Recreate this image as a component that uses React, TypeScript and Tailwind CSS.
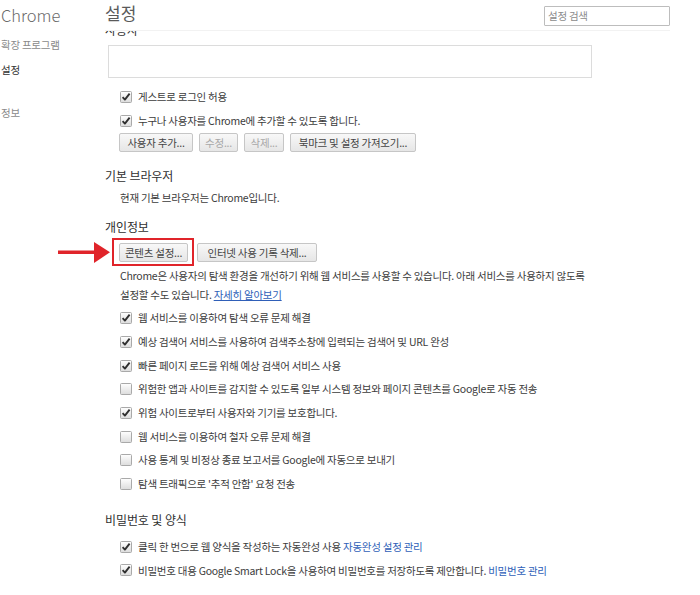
import type { ReactNode } from 'react'

const font = { fontFamily: "'Noto Sans CJK KR', 'Noto Sans', sans-serif" }

function Box({ checked }: { checked: boolean }) {
  return (
    <svg width="12" height="12" viewBox="0 0 12 12" className="shrink-0">
      <defs>
        <linearGradient id="cbg" x1="0" y1="0" x2="0" y2="1">
          <stop offset="0" stopColor="#ffffff" />
          <stop offset="1" stopColor="#dcdcdc" />
        </linearGradient>
      </defs>
      <rect x="0.5" y="0.5" width="11" height="11" rx="1" fill="url(#cbg)" stroke="#a9a9a9" />
      {checked && (
        <path d="M2.6 6.2 L4.9 8.6 L9.6 2.6" fill="none" stroke="#2f2f2f" strokeWidth="1.9" strokeLinejoin="round" />
      )}
    </svg>
  )
}

function Check({ checked = true, children }: { checked?: boolean; children: ReactNode }) {
  return (
    <div className="h-[23.7px] flex items-center pl-[15px] gap-[6px] whitespace-nowrap">
      <Box checked={checked} />
      <span>{children}</span>
    </div>
  )
}

function Btn({ children, disabled, className = '' }: { children: ReactNode; disabled?: boolean; className?: string }) {
  return (
    <button
      className={
        'h-[19px] rounded-[2px] border border-[#c6c6c6] bg-gradient-to-b from-[#f8f8f8] to-[#e6e6e6] text-[10.5px] leading-none whitespace-nowrap flex items-center justify-center ' +
        (disabled ? 'text-[#a8a8a8] ' : 'text-[#444] ') +
        className
      }
    >
      {children}
    </button>
  )
}

function Heading({ children, className = '' }: { children: ReactNode; className?: string }) {
  return <div className={'text-[12px] leading-[18px] text-[#303030] tracking-[-0.1px] ' + className}>{children}</div>
}

export default function App() {
  return (
    <div style={font} className="relative w-[700px] h-[595px] overflow-hidden bg-white flex text-[10.5px] tracking-[-0.25px] text-[#3c3c3c]">
      {/* Sidebar */}
      <div className="w-[105px] shrink-0 pl-[1px]">
        <div className="h-[31px] flex items-center text-[16.5px] text-[#6a6a6a] tracking-[0px] font-light">Chrome</div>
        <div className="mt-[6px] text-[#8a8a8a] leading-[16px]">확장 프로그램</div>
        <div className="mt-[9px] text-[#333] leading-[16px]">설정</div>
        <div className="mt-[27px] text-[#8a8a8a] leading-[16px]">정보</div>
      </div>

      {/* Main */}
      <div className="flex-1 flex flex-col">
        <div className="relative z-10 bg-white h-[31px] w-[565px] border-b border-[#f2f2f2] flex items-center justify-between">
          <div className="text-[17px] text-[#5a5a5a] tracking-[0px] -mt-[5px]">설정</div>
          <div className="w-[126px] h-[20px] border border-[#bdbdbd] rounded-[1px] flex items-center pl-[3px] text-[#8c8c8c] mt-[2px]">
            설정 검색
          </div>
        </div>

        <div className="flex flex-col">
          <Heading className="-mt-[10px]">사용자</Heading>
          <div className="mt-[6px] ml-[3px] w-[484px] h-[33px] border border-[#dcdcdc]" />

          <div className="mt-[7px]">
            <Check>게스트로 로그인 허용</Check>
            <Check>누구나 사용자를 Chrome에 추가할 수 있도록 합니다.</Check>
          </div>
          <div className="mt-[1px] pl-[14px] flex gap-[6px]">
            <Btn className="w-[74px]">사용자 추가...</Btn>
            <Btn disabled className="w-[39px]">수정...</Btn>
            <Btn disabled className="w-[40px]">삭제...</Btn>
            <Btn className="w-[126px]">북마크 및 설정 가져오기...</Btn>
          </div>

          <Heading className="mt-[15px]">기본 브라우저</Heading>
          <div className="mt-[4px] pl-[15px] leading-[18px]">현재 기본 브라우저는 Chrome입니다.</div>

          <Heading className="mt-[11px]">개인정보</Heading>
          <div className="mt-[7px] pl-[14px] flex gap-[9px]">
            <div className="relative">
              <Btn className="w-[69px]">콘텐츠 설정...</Btn>
              <div className="absolute -left-[7px] -right-[6px] -top-[5px] -bottom-[4px] border-2 border-[#e0242a]" />
            </div>
            <Btn className="w-[120px]">인터넷 사용 기록 삭제...</Btn>
          </div>
          <div className="mt-[4px] pl-[15px] leading-[19px] whitespace-nowrap">
            Chrome은 사용자의 탐색 환경을 개선하기 위해 웹 서비스를 사용할 수 있습니다. 아래 서비스를 사용하지 않도록
            <br />
            설정할 수도 있습니다. <span className="text-[#2f5fb8] underline">자세히 알아보기</span>
          </div>

          <div className="mt-[2px]">
            <Check>웹 서비스를 이용하여 탐색 오류 문제 해결</Check>
            <Check>예상 검색어 서비스를 사용하여 검색주소창에 입력되는 검색어 및 URL 완성</Check>
            <Check>빠른 페이지 로드를 위해 예상 검색어 서비스 사용</Check>
            <Check checked={false}>위험한 앱과 사이트를 감지할 수 있도록 일부 시스템 정보와 페이지 콘텐츠를 Google로 자동 전송</Check>
            <Check>위험 사이트로부터 사용자와 기기를 보호합니다.</Check>
            <Check checked={false}>웹 서비스를 이용하여 철자 오류 문제 해결</Check>
            <Check checked={false}>사용 통계 및 비정상 종료 보고서를 Google에 자동으로 보내기</Check>
            <Check checked={false}>탐색 트래픽으로 '추적 안함' 요청 전송</Check>
          </div>

          <Heading className="mt-[15px]">비밀번호 및 양식</Heading>
          <div className="mt-[6px]">
            <Check>
              클릭 한 번으로 웹 양식을 작성하는 자동완성 사용 <span className="text-[#2f5fb8]">자동완성 설정 관리</span>
            </Check>
            <Check>
              비밀번호 대용 Google Smart Lock을 사용하여 비밀번호를 저장하도록 제안합니다.{' '}
              <span className="text-[#2f5fb8]">비밀번호 관리</span>
            </Check>
          </div>
        </div>
      </div>

      {/* Annotation arrow */}
      <svg className="absolute left-[56px] top-[241px]" width="56" height="23" viewBox="0 0 56 23">
        <rect x="2" y="9.5" width="38" height="3.5" fill="#e0242a" />
        <path d="M38 1 L54 11.3 L38 22 Z" fill="#e0242a" />
      </svg>
    </div>
  )
}
